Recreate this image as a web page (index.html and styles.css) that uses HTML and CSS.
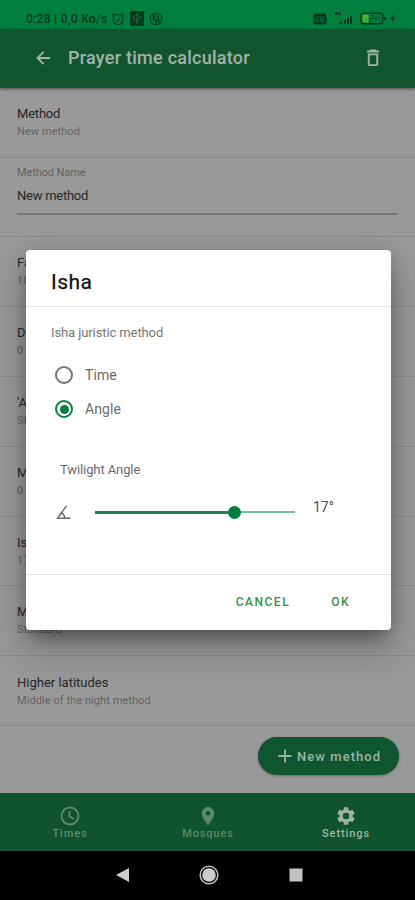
FILE: index.html
```
<!DOCTYPE html>
<html lang="en">
<head>
<meta charset="utf-8">
<title>Prayer time calculator</title>
<link rel="stylesheet" href="styles.css">
</head>
<body>
<div class="phone">
  <div class="status">
    <span class="status-text">0:28 | 0,0 Ko/s</span>
    <svg class="s-alarm" width="14" height="14" viewBox="0 0 14 14" fill="none" stroke="currentColor" stroke-width="1.1"><circle cx="7" cy="7.5" r="5"/><path d="M4.5 7.5L6.5 9.3L9.5 6M1 3L3.5 1M10.5 1L13 3"/></svg>
    <svg class="s-usb" width="14" height="15" viewBox="0 0 14 15"><rect width="14" height="15" rx="1" fill="currentColor"/><path d="M7 13V3M5.500 4.500L7 2.500L8.500 4.500M3.500 5V8L7 10M10.500 5V7.500L7 9" fill="none" stroke="#087b3d"/></svg>
    <svg class="s-loc" width="14" height="14" viewBox="0 0 14 14" fill="none" stroke="currentColor" stroke-width="1.1"><circle cx="7" cy="7" r="5.800"/><circle cx="7" cy="6.500" r="2.800"/><path d="M3 3L11 11M7 9V12"/></svg>
    <div class="status-right">
      <svg width="14" height="12" viewBox="0 0 14 12"><rect x=".5" y=".5" width="13" height="11" rx="2" fill="currentColor"/><path d="M3 4C5 2 6 5 4 6S4 9 6 8M7 3L8.500 9L11 3M9 9H12" fill="none" stroke="#087b3d"/></svg>
      <svg class="s-signal" width="19" height="13" viewBox="0 0 19 13" fill="currentColor"><path d="M1 0h2v3H1zM4 0h3v1H5v1h2v1H4zM5 10h3v2H5zM10 8h2v4h-2zM13 6h2v6h-2zM16 4h2v8h-2z"/></svg>
      <svg width="36" height="13" viewBox="0 0 36 13"><rect x=".8" y="1.200" width="22" height="10.500" rx="2.500" fill="none" stroke="currentColor" stroke-width="1.400"/><rect x="2.500" y="2.500" width="6" height="8" rx="1" fill="#43b52d"/><path d="M10 3.500h3v3h-3v3h3M16 3.500v6M19 3.500v6" fill="none" stroke="currentColor" opacity=".7"/><path d="M24 5h2v3h-2zM34 2l-4 5h2.500l-1 4 4-5.500h-2.500z" fill="currentColor"/></svg>
    </div>
  </div>
  <header class="bar">
    <svg class="back" width="14" height="14" viewBox="0 0 14 14" fill="none" stroke="currentColor" stroke-width="1.800"><path d="M14 7H1.500M7.500 1L1.500 7L7.500 13"/></svg>
    <h1>Prayer time calculator</h1>
    <svg class="trash" width="14" height="18" viewBox="0 0 14 18" fill="currentColor"><path d="M4.200 .5h5.600l.8 1H13v2H1v-2h2.400zM1.800 4.500h10.400v10.700a1.800 1.800 0 0 1-1.800 1.800H3.600a1.800 1.800 0 0 1-1.800-1.800zM3.700 6.300v8.900h6.600V6.300z" fill-rule="evenodd"/></svg>
  </header>
  <main class="content">
    <div class="row first"><b>Method</b><small>New method</small></div>
    <div class="field"><small>Method Name</small><div class="input">New method</div></div>
    <div class="row"><b>Fajr</b><small>18°</small></div>
    <div class="row"><b>Dhuhr</b><small>0 min</small></div>
    <div class="row"><b>'Asr</b><small>Standard</small></div>
    <div class="row"><b>Maghrib</b><small>0 min</small></div>
    <div class="row"><b>Isha</b><small>17°</small></div>
    <div class="row"><b>Midnight</b><small>Standard</small></div>
    <div class="row"><b>Higher latitudes</b><small>Middle of the night method</small></div>
    <div class="actions">
      <div class="fab"><svg width="14" height="14" viewBox="0 0 14 14" fill="none" stroke="currentColor" stroke-width="1.800"><path d="M7 .5V13.500M.5 7H13.500"/></svg><span>New method</span></div>
    </div>
  </main>
  <nav class="tabs">
    <div class="tab">
      <svg width="20" height="20" viewBox="0 0 20 20" fill="none" stroke="currentColor" stroke-width="1.800"><circle cx="10" cy="10" r="8.500"/><path d="M9.500 5V10.300L13.800 13"/></svg>
      <span>Times</span>
    </div>
    <div class="tab">
      <svg width="20" height="20" viewBox="0 0 20 20" fill="currentColor"><path fill-rule="evenodd" d="M10 1a6.300 6.300 0 0 0-6.300 6.300C3.700 12 10 19 10 19s6.300-7 6.300-11.700A6.300 6.300 0 0 0 10 1zm0 4a2.300 2.300 0 1 1 0 4.600A2.300 2.300 0 0 1 10 5z"/></svg>
      <span>Mosques</span>
    </div>
    <div class="tab active">
      <svg width="22" height="22" viewBox="0 0 24 24" fill="currentColor"><path d="M19.140 12.940c.04-.3.060-.61.060-.94s-.02-.64-.07-.94l2.030-1.580a.49.490 0 0 0 .12-.61l-1.920-3.320a.49.490 0 0 0-.59-.22l-2.390.96a7 7 0 0 0-1.620-.94l-.36-2.540a.48.480 0 0 0-.48-.41h-3.840a.47.470 0 0 0-.47.410l-.36 2.540c-.59.240-1.130.57-1.620.94l-2.390-.96a.48.480 0 0 0-.59.220L2.740 8.870a.47.470 0 0 0 .12.610l2.030 1.580a6 6 0 0 0 0 1.880l-2.030 1.580a.49.490 0 0 0-.12.610l1.920 3.320c.12.220.37.290.59.220l2.390-.96c.5.380 1.030.7 1.620.94l.36 2.540c.05.240.24.410.48.410h3.840c.24 0 .44-.17.470-.41l.36-2.540a7 7 0 0 0 1.620-.94l2.390.96c.22.080.47 0 .59-.22l1.920-3.320a.47.470 0 0 0-.12-.61zM12 15.600A3.600 3.600 0 1 1 12 8.400a3.600 3.600 0 0 1 0 7.200z"/></svg>
      <span>Settings</span>
    </div>
  </nav>
  <div class="system">
    <svg width="14" height="16" viewBox="0 0 14 16"><path d="M0 8L13 1V15z" fill="#ccc"/></svg>
    <svg width="20" height="20" viewBox="0 0 20 20"><circle cx="10" cy="10" r="8.800" fill="none" stroke="#bbb" stroke-width="1.600"/><circle cx="10" cy="10" r="6.800" fill="#ccc"/></svg>
    <svg width="14" height="14" viewBox="0 0 14 14"><rect x=".5" y=".5" width="13" height="13" fill="#c2c2c2"/></svg>
  </div>

  <section class="dialog">
    <h2>Isha</h2>
    <div class="body">
      <p class="caption">Isha juristic method</p>
      <div class="option"><span class="radio"></span>Time</div>
      <div class="option"><span class="radio on"></span>Angle</div>
      <p class="angle-label">Twilight Angle</p>
      <div class="slider-row">
        <svg width="15" height="15" viewBox="0 0 15 15" fill="none" stroke="#666" stroke-width="1.400"><path d="M10.500 .8L1.500 13.300H14.500M4.500 8C7.500 8.500 8.700 10.700 8.500 13.300"/></svg>
        <div class="track"><div class="filled"></div><div class="thumb"></div><div class="rest"></div></div>
        <span class="value">17°</span>
      </div>
    </div>
    <footer><span>CANCEL</span><span>OK</span></footer>
  </section>
</div>
</body>
</html>
```
FILE: styles.css
```
* { box-sizing: border-box; }
body { margin: 0; font-family: Roboto, "Liberation Sans", sans-serif; }
h1, h2, p { margin: 0; }
svg { display: block; flex: none; }
.phone { position: relative; width: 415px; height: 900px; display: flex; flex-direction: column; overflow: hidden; background: #999; }
.status { height: 29px; flex: none; display: flex; align-items: center; padding: 8px 19px 0 26px; background: #007f3f; color: #07391f; }
.status-text { width: 82px; font-size: 12px; font-weight: 500; letter-spacing: .3px; white-space: nowrap; }
.s-alarm { margin-left: 3px; }
.s-usb { margin-left: 5px; }
.s-loc { margin-left: 5px; }
.status-right { margin-left: auto; display: flex; align-items: center; }
.s-signal { margin: 0 7px; }
.bar { height: 59px; flex: none; display: flex; align-items: center; padding: 0 35px 1px 36px; background: #135430; color: #a0b5a8; box-shadow: 0 1px 3px rgba(0,0,0,.5); z-index: 1; }
.bar h1 { flex: 1; margin-left: 18px; font-size: 18px; font-weight: 500; letter-spacing: .25px; line-height: 24px; }
.content { flex: 1; min-height: 0; }
.row { height: 69.900px; padding: 17px 17px 0; border-bottom: 1px solid #8a8a8a; }
.row.first { height: 70px; }
.row:nth-last-child(2) { padding-top: 18px; }
.row b { display: block; font-size: 13px; font-weight: 400; line-height: 18px; letter-spacing: 0; color: #272727; }
.row.first b { letter-spacing: -.2px; }
.row small, .field small { display: block; font-size: 11px; line-height: 16px; letter-spacing: .07px; color: #626262; }
.row small { margin-top: 1px; }
.field { height: 79px; padding: 7px 17px 0; border-bottom: 1px solid #8a8a8a; }
.field small { letter-spacing: -.1px; }
.input { height: 34px; padding-top: 6px; border-bottom: 2px solid #777; font-size: 13px; line-height: 18px; letter-spacing: -.25px; color: #272727; }
.actions { display: flex; justify-content: flex-end; padding: 11px 16px 0; }
.fab { width: 141px; height: 38px; border-radius: 19px; background: #0f5630; color: #9bb3a4; display: flex; align-items: center; gap: 5px; padding-left: 20px; font-size: 13px; font-weight: 500; letter-spacing: 1.050px; white-space: nowrap; box-shadow: 0 1px 3px rgba(0,0,0,.3); }
.tabs { height: 58px; flex: none; display: grid; grid-template-columns: repeat(3, 1fr); padding-left: 1px; background: #11532f; }
.tab { display: flex; flex-direction: column; align-items: center; padding-top: 13px; color: #5c8a70; font-size: 11px; font-weight: 500; line-height: 15px; letter-spacing: .9px; }
.tab.active { padding-top: 12px; color: #a0b5a8; }
.tab.active span { margin-top: -1px; }
.system { height: 49px; flex: none; display: flex; justify-content: center; align-items: center; gap: 69.500px; padding: 0 0 1px 3px; background: #000; }
.dialog { position: absolute; left: 26px; top: 250px; width: 365px; height: 380px; display: flex; flex-direction: column; border-radius: 4px; background: #fff; box-shadow: 0 11px 15px -7px rgba(0,0,0,.3), 0 20px 34px 3px rgba(0,0,0,.2), 0 4px 20px rgba(0,0,0,.16); }
.dialog h2 { height: 57px; padding: 18px 25px 0; font-size: 21px; line-height: 28px; font-weight: 400; letter-spacing: .5px; color: #111; -webkit-text-stroke: .25px #111; border-bottom: 1px solid #e4e4e4; }
.body { flex: 1; padding: 17px 25px 0; color: #6b6b6b; }
.caption { font-size: 13px; line-height: 18px; margin-bottom: 16px; color: #777; letter-spacing: -.1px; }
.option { display: flex; align-items: center; height: 34px; padding-left: 4px; gap: 12px; font-size: 14px; letter-spacing: .1px; }
.radio { width: 18px; height: 18px; border: 2px solid #757575; border-radius: 50%; display: grid; place-items: center; }
.radio.on { border-color: #087d40; }
.radio.on::after { content: ""; width: 9px; height: 9px; border-radius: 50%; background: #087d40; }
.angle-label { margin: 35px 0 0 9px; font-size: 13px; line-height: 18px; letter-spacing: -.1px; }
.slider-row { display: flex; align-items: center; height: 30px; margin-top: 18px; padding-left: 5px; }
.track { width: 200px; margin-left: 24px; display: flex; align-items: center; }
.filled { width: 133px; height: 3px; background: #258251; }
.thumb { width: 13px; height: 13px; border-radius: 50%; background: #037e3e; }
.rest { flex: 1; height: 2px; background: #70c597; }
.value { margin: -10px 0 0 18px; font-size: 14px; color: #505050; }
.dialog footer { height: 56px; flex: none; border-top: 1px solid #e4e4e4; display: flex; align-items: center; justify-content: flex-end; gap: 41px; padding: 0 41px 1px 0; color: #32963c; font-size: 12px; font-weight: 500; letter-spacing: 1.500px; }
```
